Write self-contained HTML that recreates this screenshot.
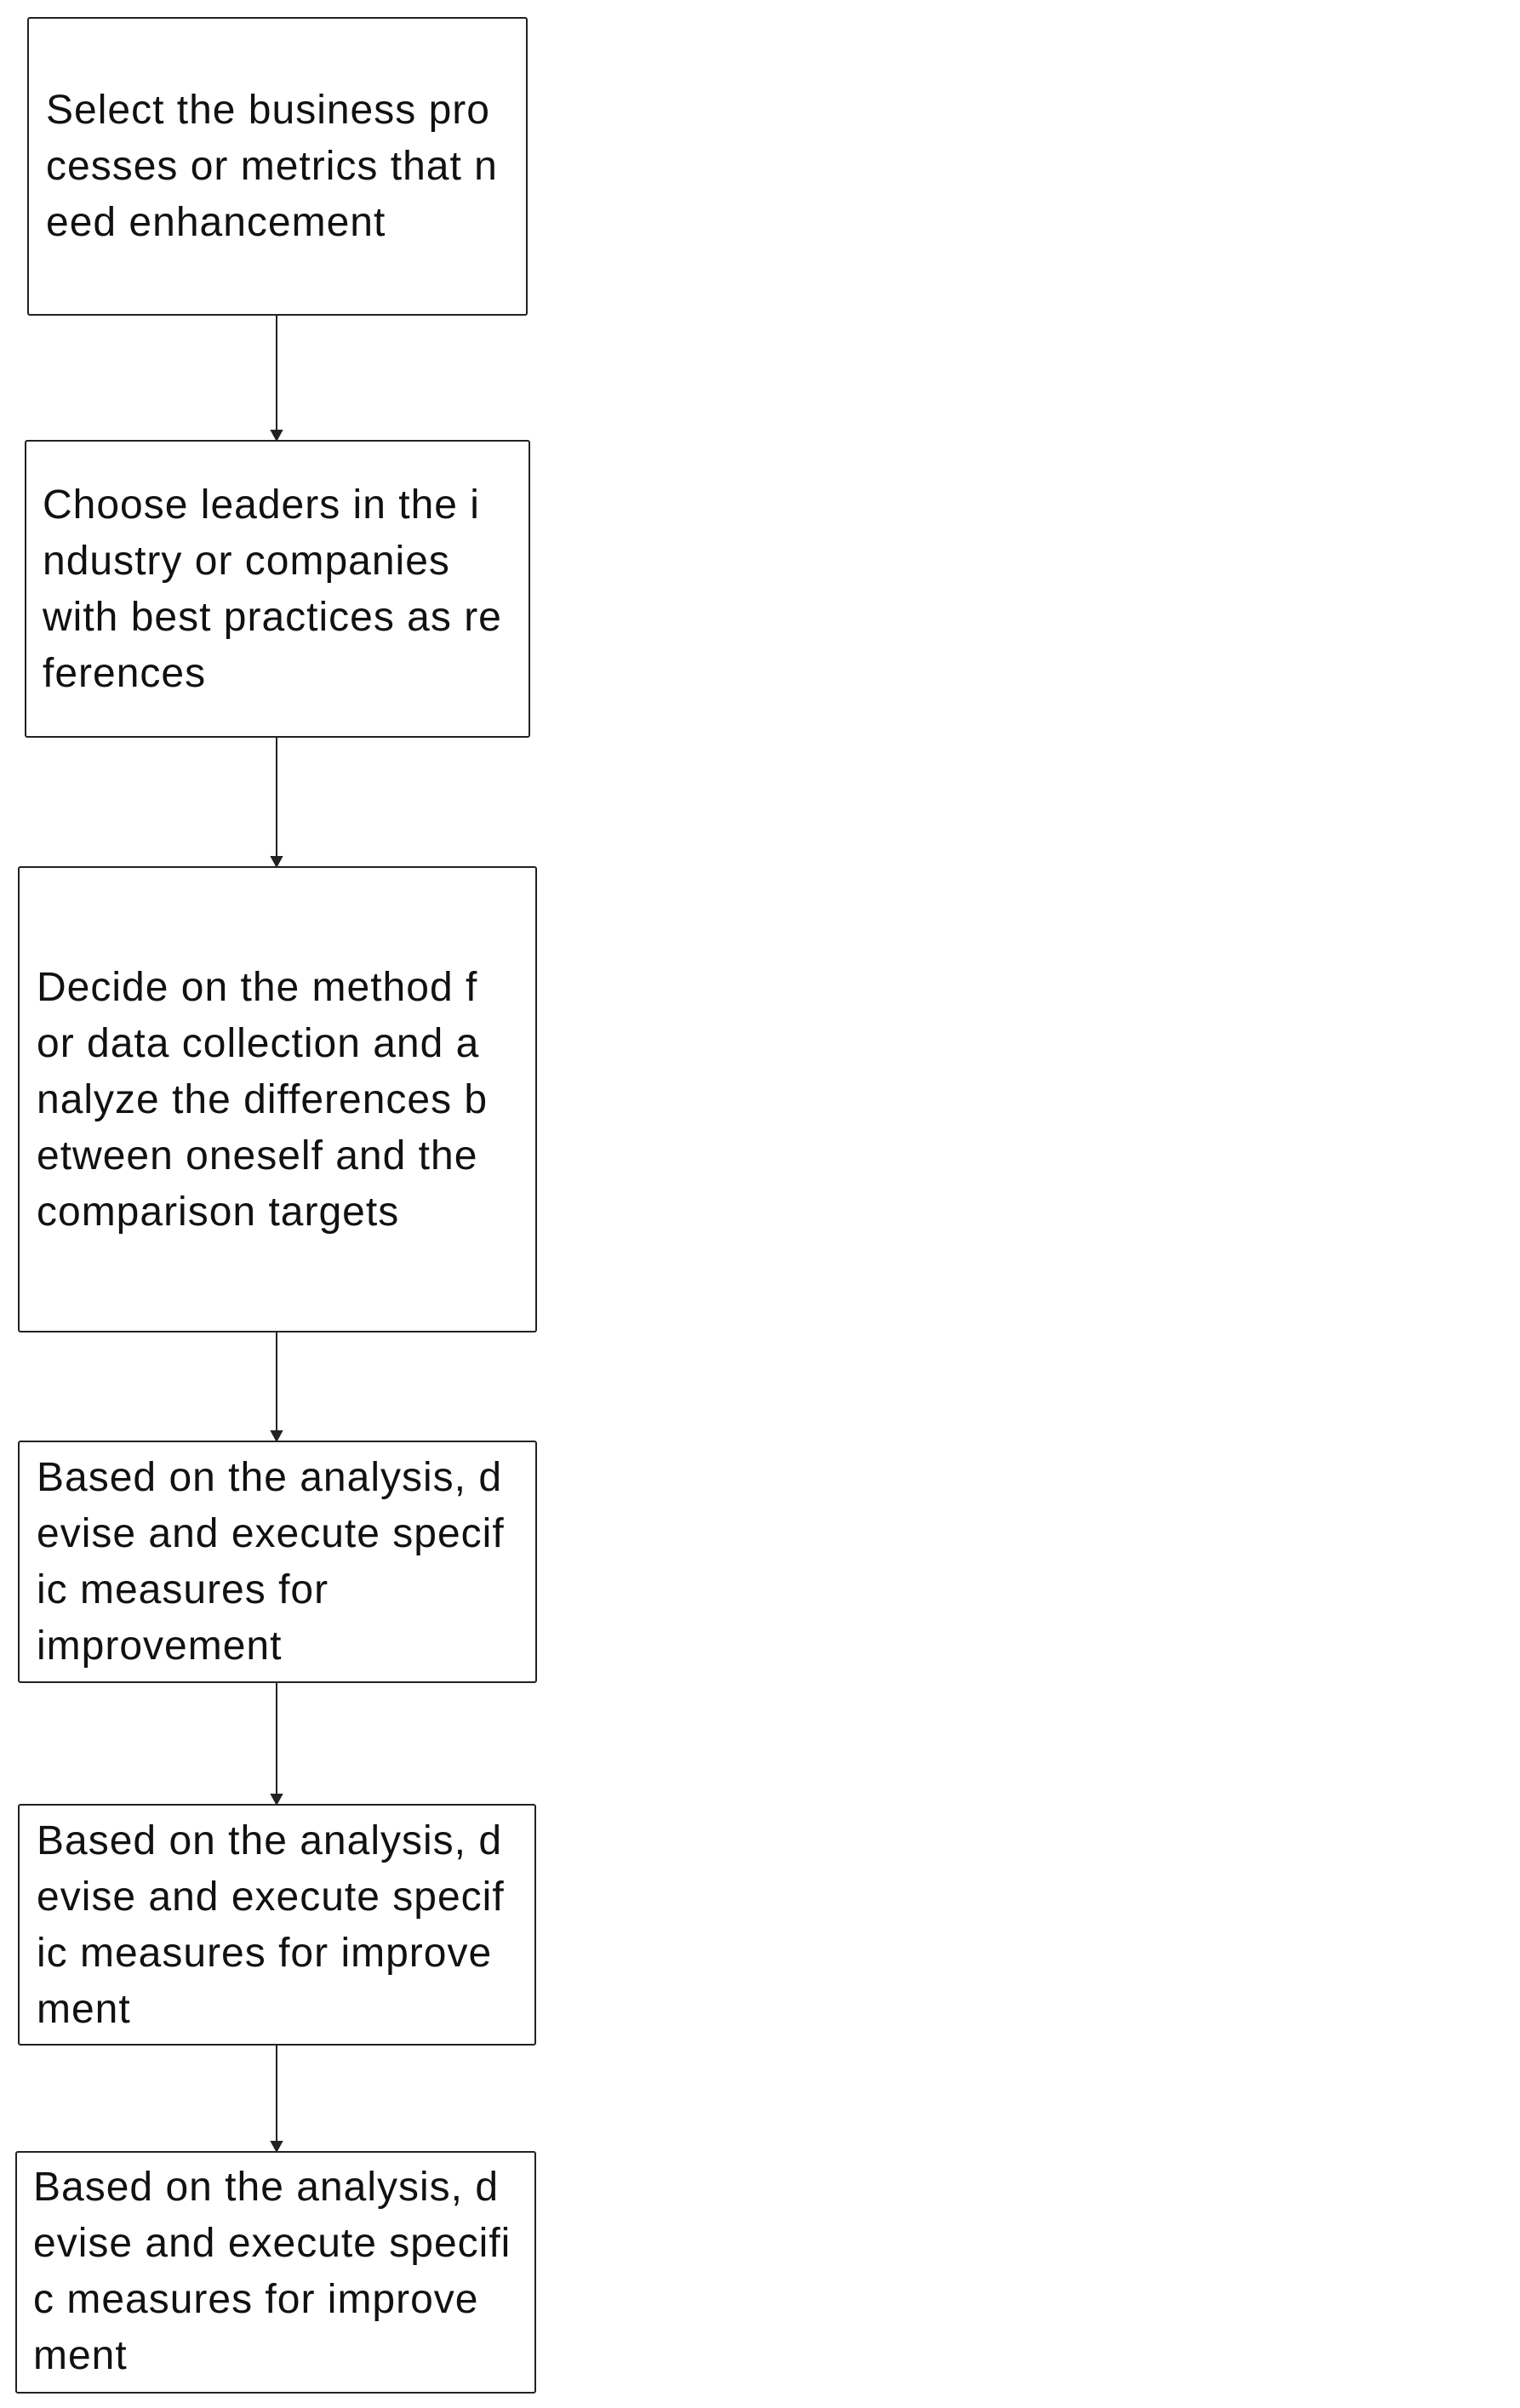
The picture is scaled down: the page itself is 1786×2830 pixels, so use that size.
<!DOCTYPE html>
<html><head><meta charset="utf-8"><style>
body{margin:0;width:1786px;height:2830px;background:#fff;position:relative;overflow:hidden;font-family:"Liberation Sans","Noto Sans CJK SC",sans-serif;color:#111}
.b{position:absolute;border:2px solid #222;border-radius:3px;box-sizing:border-box}
.t{position:absolute;font-size:48px;letter-spacing:1px;line-height:66px;white-space:pre}
svg{position:absolute;left:0;top:0}
</style></head><body>
<div class="b" style="left:32px;top:20px;width:588px;height:351px"></div>
<div class="b" style="left:29px;top:517px;width:594px;height:350px"></div>
<div class="b" style="left:21px;top:1018px;width:610px;height:548px"></div>
<div class="b" style="left:21px;top:1693px;width:610px;height:285px"></div>
<div class="b" style="left:21px;top:2120px;width:609px;height:284px"></div>
<div class="b" style="left:18px;top:2528px;width:612px;height:285px"></div>
<svg width="1786" height="2830">
<g stroke="#222" stroke-width="2" fill="#222">
<line x1="325" y1="371" x2="325" y2="508"/><path d="M319 506 L331 506 L325 517 Z"/>
<line x1="325" y1="867" x2="325" y2="1009"/><path d="M319 1007 L331 1007 L325 1018 Z"/>
<line x1="325" y1="1566" x2="325" y2="1684"/><path d="M319 1682 L331 1682 L325 1693 Z"/>
<line x1="325" y1="1978" x2="325" y2="2111"/><path d="M319 2109 L331 2109 L325 2120 Z"/>
<line x1="325" y1="2404" x2="325" y2="2519"/><path d="M319 2517 L331 2517 L325 2528 Z"/>
</g></svg>
<div class="t" style="left:54px;top:97px">Select the business pro
cesses or metrics that n
eed enhancement</div>
<div class="t" style="left:50px;top:561px">Choose leaders in the i
ndustry or companies
with best practices as re
ferences</div>
<div class="t" style="left:43px;top:1128px">Decide on the method f
or data collection and a
nalyze the differences b
etween oneself and the
comparison targets</div>
<div class="t" style="left:43px;top:1704px">Based on the analysis, d
evise and execute specif
ic measures for
improvement</div>
<div class="t" style="left:43px;top:2131px">Based on the analysis, d
evise and execute specif
ic measures for improve
ment</div>
<div class="t" style="left:39px;top:2538px">Based on the analysis, d
evise and execute specifi
c measures for improve
ment</div>
</body></html>
